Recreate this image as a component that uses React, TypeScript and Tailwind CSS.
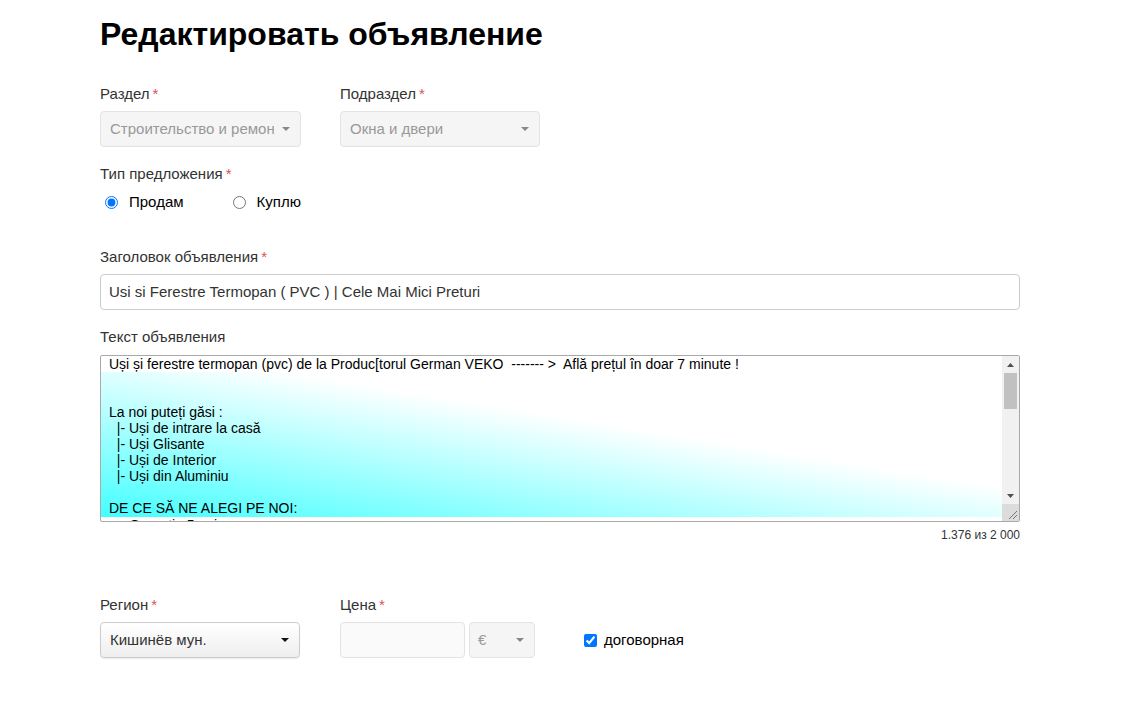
import React from "react";

const TEXT_LINES_TOP = [
  "Uși și ferestre termopan (pvc) de la Produc[torul German VEKO  ------- >  Află prețul în doar 7 minute !",
];

const TEXT_LINES_GRADIENT = [
  "",
  "",
  "La noi puteți găsi :",
  "  |- Uși de intrare la casă",
  "  |- Uși Glisante",
  "  |- Uși de Interior",
  "  |- Uși din Aluminiu",
  "",
  "DE CE SĂ NE ALEGI PE NOI:",
];

const TEXT_LINES_BOTTOM = ["   - Garantie 5 ani", "   - Montaj profesional"];

function Label({ children, required }: { children: React.ReactNode; required?: boolean }) {
  return (
    <div className="h-5 text-[15px] leading-5 text-[#333]">
      {children}
      {required && <span className="ml-[3px] text-[#d9534f]">*</span>}
    </div>
  );
}

function Caret({ color }: { color: string }) {
  return (
    <svg width="8" height="4" viewBox="0 0 8 4" className="shrink-0">
      <path d="M0 0 L8 0 L4 4 Z" fill={color} />
    </svg>
  );
}

function DisabledSelect({ value, className }: { value: string; className: string }) {
  return (
    <div
      className={`flex h-9 items-center rounded-[4px] border border-[#e3e3e3] bg-[#f5f5f5] pl-[9px] pr-[10px] text-[15px] text-[#999] ${className}`}
    >
      <span className="flex-1 overflow-hidden whitespace-nowrap">{value}</span>
      <span className="ml-[8px]">
        <Caret color="#888" />
      </span>
    </div>
  );
}

function Line({ text }: { text: string }) {
  return <div className="h-4 whitespace-pre">{text || " "}</div>;
}

export default function App() {
  return (
    <div className="min-h-[727px] bg-white font-['Liberation_Sans',Arial,sans-serif]">
      <div className="ml-[100px] w-[920px] pt-[14px]">
        <h1 className="h-[40px] text-[32px] font-bold leading-[40px] text-black">Редактировать объявление</h1>

        {/* Раздел / Подраздел */}
        <div className="mt-[30px] flex gap-[40px]">
          <div className="w-[200px]">
            <Label required>Раздел</Label>
            <DisabledSelect className="mt-[7px] w-[201px]" value="Строительство и ремонт" />
          </div>
          <div className="w-[200px]">
            <Label required>Подраздел</Label>
            <DisabledSelect className="mt-[7px] w-[200px]" value="Окна и двери" />
          </div>
        </div>

        {/* Тип предложения */}
        <div className="mt-[17px]">
          <Label required>Тип предложения</Label>
          <div className="mt-[8px] flex h-5 items-center text-[15px] text-black">
            <label className="flex items-center">
              <input type="radio" name="type" defaultChecked className="m-0 ml-[5px] h-[13px] w-[13px]" />
              <span className="ml-[11px]">Продам</span>
            </label>
            <label className="ml-[49px] flex items-center">
              <input type="radio" name="type" className="m-0 h-[13px] w-[13px]" />
              <span className="ml-[11px]">Куплю</span>
            </label>
          </div>
        </div>

        {/* Заголовок */}
        <div className="mt-[35px]">
          <Label required>Заголовок объявления</Label>
          <div className="mt-[7px] flex h-9 items-center rounded-[4px] border border-[#ccc] bg-white pl-[8px] text-[15px] text-[#333]">
            Usi si Ferestre Termopan ( PVC ) | Cele Mai Mici Preturi
          </div>
        </div>

        {/* Текст */}
        <div className="mt-[17px]">
          <Label>Текст объявления</Label>
          <div className="relative mt-[8px] flex h-[167px] overflow-hidden rounded-[2px] border border-[#a9a9a9] bg-white">
            <div className="flex-1 overflow-hidden text-[14px] leading-4 text-black">
              <div className="pl-[8px]">
                {TEXT_LINES_TOP.map((l, i) => (
                  <Line key={i} text={l} />
                ))}
              </div>
              <div className="h-[145px] bg-[linear-gradient(to_top_right,#44ffff,#ffffff_60%)] pl-[8px]">
                {TEXT_LINES_GRADIENT.map((l, i) => (
                  <Line key={i} text={l} />
                ))}
              </div>
              <div className="pl-[8px]">
                {TEXT_LINES_BOTTOM.map((l, i) => (
                  <Line key={i} text={l} />
                ))}
              </div>
            </div>
            {/* scrollbar */}
            <div className="flex w-[17px] flex-col bg-[#f1f1f1]">
              <div className="flex h-[17px] items-center justify-center">
                <svg width="7" height="4" viewBox="0 0 7 4">
                  <path d="M0 4 L7 4 L3.5 0 Z" fill="#505050" />
                </svg>
              </div>
              <div className="mx-[2px] h-[36px] bg-[#c1c1c1]" />
              <div className="flex-1" />
              <div className="flex h-[17px] items-center justify-center">
                <svg width="7" height="4" viewBox="0 0 7 4">
                  <path d="M0 0 L7 0 L3.5 4 Z" fill="#505050" />
                </svg>
              </div>
              <div className="flex h-[17px] items-end justify-end bg-[#dcdcdc] p-[2px]">
                <svg width="9" height="9" viewBox="0 0 9 9">
                  <path d="M1 9 L9 1 M5 9 L9 5" stroke="#777" strokeWidth="1" />
                </svg>
              </div>
            </div>
          </div>
          <div className="mt-[5px] text-right text-[12px] leading-4 text-[#333]">1.376 из 2 000</div>
        </div>

        {/* Регион / Цена */}
        <div className="mt-[52px] flex">
          <div className="w-[240px]">
            <Label required>Регион</Label>
            <div className="mt-[7px] flex h-9 w-[200px] items-center rounded-[4px] border border-[#ccc] bg-[linear-gradient(to_bottom,#ffffff,#eeeeee)] pl-[9px] pr-[10px] text-[15px] text-[#333] shadow-[0_1px_1px_rgba(0,0,0,0.08)]">
              <span className="flex-1">Кишинёв мун.</span>
              <Caret color="#111" />
            </div>
          </div>
          <div>
            <Label required>Цена</Label>
            <div className="mt-[7px] flex items-center">
              <div className="h-9 w-[125px] rounded-[4px] border border-[#e3e3e3] bg-[#fafafa]" />
              <div className="ml-[4px] flex h-9 w-[66px] items-center rounded-[4px] border border-[#e3e3e3] bg-[#f5f5f5] pl-[8px] pr-[10px] text-[15px] text-[#999]">
                <span className="flex-1">€</span>
                <Caret color="#888" />
              </div>
              <label className="ml-[49px] flex items-center text-[15px] text-black">
                <input type="checkbox" defaultChecked className="m-0 h-[13px] w-[13px]" />
                <span className="ml-[7px]">договорная</span>
              </label>
            </div>
          </div>
        </div>
      </div>
    </div>
  );
}
